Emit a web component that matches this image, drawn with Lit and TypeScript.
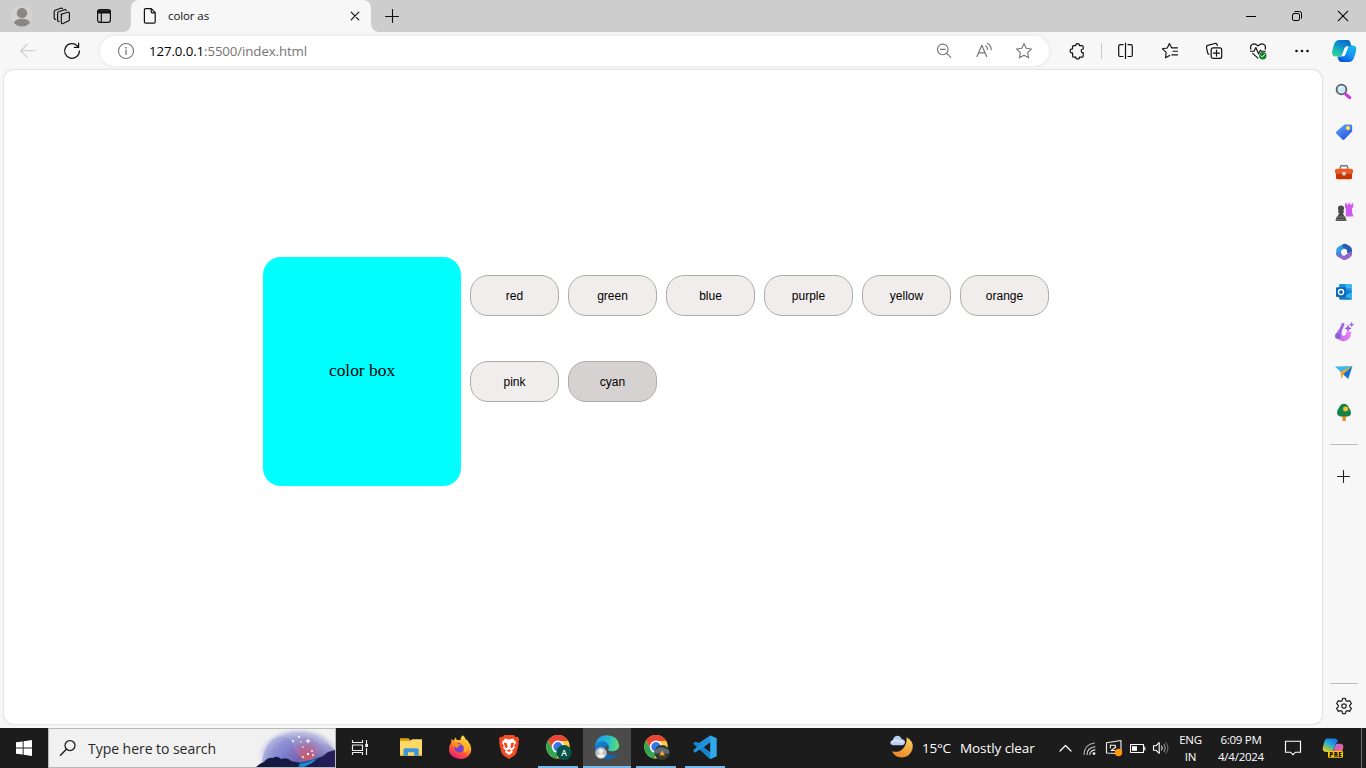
import { LitElement, html, css, svg } from "lit";
import { customElement, state } from "lit/decorators.js";

const icon = (w: number, h: number, body: unknown) => html`<svg
  width=${w} height=${h} viewBox="0 0 ${w} ${h}" fill="none" stroke-linecap="round" stroke-linejoin="round">${body}</svg>`;

const iconAvatar = icon(22, 22, svg`
  <defs><clipPath id="av"><circle cx="11" cy="11" r="10.6"/></clipPath></defs>
  <circle cx="11" cy="11" r="10.8" fill="#d5d1ce"/>
  <g clip-path="url(#av)"><circle cx="11" cy="8.2" r="5.1" fill="#8b8682"/><ellipse cx="11" cy="18" rx="8" ry="4.3" fill="#8b8682"/></g>`);
const iconWorkspaces = icon(18, 18, svg`<g stroke="#111" stroke-width="1.15">
  <path d="M8.3 7.3 15 5.2q1.7-.4 1.7 1.2v6.1q0 1-1 1.4l-5.4 2.6q-1.7.7-1.7-1V8.900q0-1.200 1-1.600" transform="translate(-.3 0)"/>
  <path d="M6 14.400q-1.400.3-1.400-1.100V6.400q0-1.200 1.100-1.600l5.900-2.100q1.200-.3 1.500.7"/>
  <path d="M2.700 12.400q-1.500.1-1.500-1.300V4.800q0-1.100 1-1.500L7.700 1.200q1.400-.4 1.800.5"/></g>`);
const iconVerticalTabs = icon(16, 16, svg`<g stroke="#111" stroke-width="1.2"><rect x="1.6" y="1.6" width="12.8" height="12.8" rx="2.3"/>
  <path d="M1.6 2.9h12.8v2H1.6z" fill="#111"/><path d="M5.3 5v9.2"/></g>`);
const iconFile = icon(16, 18, svg`<path d="M3.500 1.600h5.800l3.900 4v9.300q0 1.200-1.200 1.200H3.600q-1.200 0-1.200-1.200V2.800q0-1.200 1.100-1.200zM9.200 1.800v3q0 1 1 1h2.900" stroke="#111" stroke-width="1.2"/>`);
const iconClose = icon(10, 10, svg`<path d="M1.200 1.200l7.600 7.600M8.800 1.200L1.200 8.800" stroke="#111" stroke-width="1.2"/>`);
const iconPlus = icon(14, 14, svg`<path d="M7.500.5v13M.5 7.500h13" stroke="#111" stroke-width="1.1"/>`);
const iconAdd = icon(13, 13, svg`<path d="M6.500.5v12M.5 6.500h12" stroke="#222" stroke-width="1.1"/>`);
const iconMinimize = icon(12, 12, svg`<path d="M1.500 6.500h9" stroke="#000" stroke-width="1"/>`);
const iconRestore = icon(12, 12, svg`<g stroke="#000"><rect x="1.500" y="3.500" width="7" height="7" rx="1.400"/><path d="M3.900 1.500h4.700q1.900 0 1.900 1.900v4.700"/></g>`);
const iconWinClose = icon(12, 12, svg`<path d="M1.200 1.200l9.600 9.600M10.800 1.200L1.200 10.800" stroke="#000" stroke-width="1.05"/>`);

const iconBack = icon(18, 16, svg`<path d="M16.500 7.800H1.600M8.100 1.500 1.600 7.800l6.500 6.300" stroke="#cacaca" stroke-width="1.1"/>`);
const iconReload = icon(18, 18, svg`<path d="M16.400 9a7.400 7.400 0 1 1-2.300-5.400l1.400 1.500M15.600 1.200v4.200h-4.200" stroke="#111" stroke-width="1.25"/>`);
const iconInfo = icon(18, 18, svg`<circle cx="9" cy="9" r="7.500" stroke="#767676" stroke-width="1.1"/><path d="M9 8.100v4.500" stroke="#767676" stroke-width="1.3"/><circle cx="9" cy="5.700" r=".85" fill="#767676"/>`);
const iconZoomOut = icon(16, 16, svg`<g stroke="#767676" stroke-width="1.150"><circle cx="6.800" cy="6.400" r="5.300"/><path d="M4.400 6.400h4.800M10.700 10.300l4 4"/></g>`);
const iconReadAloud = icon(18, 18, svg`<g stroke="#767676" stroke-width="1.200"><path d="M2 14.500 6.800 3.200 11.600 14.500M3.600 10.900h6.400"/><path d="M10.800 3.900q1.800 1.200 1.700 3.500M12.700 1.400q3.500 2.200 3.500 6.300"/></g>`);
const starPath = "M9 1.500l2.200 4.800 5.200.7-3.800 3.600 1 5.200L9 13.200l-4.600 2.600 1-5.200L1.600 7l5.200-.7z";
const iconStar = icon(18, 18, svg`<path d=${starPath} stroke="#767676" stroke-width="1.1"/>`);
const iconPuzzle = icon(18, 18, svg`<path transform="translate(1 .2)" d="M4.800 3.400h2q-.3-1.900 1.800-2 2.100.1 1.800 2h2.500q1.300 0 1.300 1.300v2.100q-1.900-.2-2 1.800.1 2 2 1.800v3.300q0 1.300-1.300 1.300h-2.400q.2 1.700-1.900 1.700-2 0-1.800-1.700H4.900q-1.300 0-1.300-1.300v-3Q1.200 10.800 1.200 8.700 1.300 6.500 3.500 6.700V4.700Q3.500 3.400 4.800 3.400z" stroke="#111" stroke-width="1.2"/>`);
const iconSplit = icon(18, 18, svg`<path d="M6 2.700H3.300q-1.600 0-1.600 1.600v8.600q0 1.600 1.600 1.600H6M11 2.700h2.700q1.600 0 1.600 1.600v8.600q0 1.600-1.600 1.600H11M8.500 1.200v15.300" stroke="#111" stroke-width="1.2"/>`);
const iconFavorites = icon(18, 18, svg`<path d="M5.200 10.300 1.400 6.800l4.900-.8L8.400 1.600l2.200 4.200h5.900M12 9.200h4.500M10.800 12.800h5.700M5.200 10.300l-.7 5.400 4.200-2.300" stroke="#111" stroke-width="1.150"/>`);
const iconCollections = icon(18, 18, svg`<g stroke="#111" stroke-width="1.2"><rect x="6.200" y="5.900" width="10.500" height="10.500" rx="2"/><path d="M11.500 8.200v5.900M8.500 11.200h5.900M3.900 12.200Q2.900 12 2.600 10.900L1.500 5.500Q1.200 4 2.700 3.400L9.900 1.500q1.500-.3 2.100 1l.4 1"/></g>`);
const iconHeart = icon(19, 18, svg`<g stroke="#111" stroke-width="1.150"><path d="M1.800 7.200Q.8 4.100 3.100 2.400 5.800.9 9 3.900q3.200-3 5.900-1.500 2.400 1.700 1.300 4.800M1.500 9.200H5l1.800-3.600 2.700 6.200 1.900-3.600.9 1h3.900M3.700 11.400l5.200 4.700"/></g>
  <circle cx="13.800" cy="13.700" r="3.700" fill="#12832c"/><path d="M12.100 13.800l1.200 1.200 2.300-2.500" stroke="#fff" stroke-width="1"/>`);
const iconDots = icon(16, 4, svg`<g fill="#111"><circle cx="2.500" cy="2" r="1.300"/><circle cx="8" cy="2" r="1.300"/><circle cx="13.500" cy="2" r="1.300"/></g>`);
const iconCopilot = icon(26, 24, svg`<defs>
  <linearGradient id="ca" x1=".8" y1="0" x2=".2" y2="1"><stop stop-color="#0a66c8"/><stop offset=".45" stop-color="#0f95cf"/><stop offset=".7" stop-color="#1bb9b4"/><stop offset="1" stop-color="#39d48c"/></linearGradient>
  <linearGradient id="cb" x1=".8" y1="0" x2=".3" y2="1"><stop stop-color="#1fb6e4"/><stop offset=".5" stop-color="#149af5"/><stop offset="1" stop-color="#0853d8"/></linearGradient></defs>
  <path d="M17.500 6.500H22q3.400.3 3.300 3.500-.2 3.200-2 8-1.700 5-5.300 5h-8q-2-.3-2.700-2.500l-.9-3h3.200q1.800 0 2.600-2z" fill="url(#cb)"/>
  <path d="M8 1h9q1.600.2 2.200 2l1.300 4.200h-4.200q-1.900 0-2.600 1.900L11 15.700q-.7 1.800-2.400 1.800H4Q1 17 1 13.800q.3-3.300 2-8.300Q4.600 1 8 1z" fill="url(#ca)"/>
  <path d="M15.300 7.800h2.300l-.9 1.600-2.300 6.200q-.5 1.400-1.600 1.700h-2.400q.7-.5 1.100-1.600l2.300-6.400q.5-1.200 1.500-1.500z" fill="#fbfbfb"/>`);

const sideSearch = icon(18, 18, svg`<path d="M11 11.500l3.700 3.200" stroke="#d72be5" stroke-width="3"/><circle cx="6.500" cy="6.500" r="4.900" fill="#c9e9fb" stroke="#5d6064" stroke-width="1.800"/><path d="M4.200 5.900Q4.900 4.200 6.500 4" stroke="#fff"/>`);
const sideTag = icon(18, 18, svg`<defs><linearGradient id="tg" x1="0" y1="0" x2=".6" y2="1"><stop stop-color="#58a9fa"/><stop offset="1" stop-color="#2d57e5"/></linearGradient></defs>
  <path d="M9.500 1.500 15.600 1.400q1.600.1 1.600 1.700l-.1 5.500L9.400 16.500q-1 .9-2 0L1.500 10.800q-1-1.100 0-2.200z" fill="url(#tg)"/><circle cx="13" cy="5" r="2.200" fill="#f7cb4c"/><circle cx="13" cy="5" r=".9" fill="#fff3bc"/>`);
const sideTools = icon(20, 18, svg`<path d="M6.300 5.500V4Q6.300 2.800 7.500 2.800h5Q13.700 2.800 13.700 4v1.500" stroke="#777" stroke-width="1.400"/><path d="M3 5.800h14q2 0 2 2v2.500H1V7.800q0-2 2-2z" fill="#ef5a22"/><path d="M2 10.300h16v4.500q0 1.500-1.500 1.500h-13Q2 16.300 2 14.800z" fill="#c93405"/><rect x="8.200" y="8.700" width="3.600" height="3.800" rx=".9" fill="#cfd0d0"/>`);
const sideGames = icon(20, 20, svg`<path d="M11 1.300h1.900v1.500h1.400V1.300h2v1.500h1.400V1.300h1.500v4.500h-1.300l.5 6.200q1.200 1 .9 2.500h-7.500V6H11z" fill="#d259ee"/><g fill="#4b4b4b"><circle cx="7" cy="6.500" r="3.100"/><path d="M4 9.100h6v1.500H9q0 3 2.600 4.800l.9 3.500h-11l.9-3.500Q5 13.600 5 10.600H4z"/></g><path d="M3.200 15h7.600M2.200 17.800h9.600" stroke="#777"/>`);
const side365 = icon(18, 18, svg`<path d="M9.300.8 4.500 3Q1.300 4.600 1.200 8v3.500q.4 2.200 2.500 2.500l2.600-1.700V8l5.500-3.500z" fill="#31a1d8"/><path d="M7.700 1.300q2-1 4 0l3.300 1.900q2 1.300 2 3.900v5l-5-2.500V6.900L7.400 4.200z" fill="#2d5cb2"/><path d="M17 8.500v2.700q-.1 2-2 3.200l-3.500 2q-2 1-4 0l-3.600-2.200q-2.200-1.200-2.700-3.700 2.400 2.300 5 1.100L9 13l3-2.200z" fill="#9565c7"/><path d="M1.200 9.500q0 3.400 3 5 2.400-.6 2.400-3.200V9z" fill="#5d7bd8"/><path d="M9 5.800l2.900 1.600v3.200L9 12.200l-2.800-1.600V7.400z" fill="#f7f7f7"/>`);
const sideOutlook = icon(18, 18, svg`<path d="M5 1h10.500q1.200 0 1.200 1.200V9H4.100V2Q4.100 1 5 1z" fill="#1790df"/><path d="M10.600 1h4.900q1.200 0 1.200 1.200v3h-6z" fill="#35bdf3"/><path d="M4 9l13-1v7.700q0 1-1.200 1H5.500Q4 16.700 4 15z" fill="#1479ca"/><path d="M9 13.500 17 8.500V16z" fill="#2eb3ee"/><rect x="1" y="4.300" width="10" height="9.600" rx="1" fill="#0e68b7"/><circle cx="6" cy="9.100" r="2.600" stroke="#fff" stroke-width="1.300"/>`);
const sideBrush = icon(20, 20, svg`<defs><linearGradient id="br" x1="0" y1="1" x2="1" y2="0"><stop stop-color="#c566ec"/><stop offset="1" stop-color="#f788f2"/></linearGradient></defs><path d="M8.500 5.200Q1.500 8.500 2.300 13.600 4 19.400 9.800 19.200q7.300-.8 7.500-9.400l-5-.2q.2 3.700-2.500 4.100-2.600.1-1.900-3.100z" fill="url(#br)"/><path d="M9 2.300 4.500 12.500" stroke="#a06be2" stroke-width="3"/><circle cx="4" cy="14" r="3" fill="#8464da"/><path d="M14 3.200l1 2.200 2.200 1-2.200.9-1 2.200-.9-2.200-2.200-.9 2.200-1zM17.600 .7l.6 1.400 1.400.6-1.400.6-.6 1.400-.6-1.400-1.400-.6 1.400-.6z" fill="#a054e2" stroke="#a054e2" stroke-width=".5"/>`);
const sidePlane = icon(20, 18, svg`<path d="M1 3.500 18.500 3.100 8 10.200z" fill="#40b8ed"/><path d="M18.500 3.100 14.200 16 8 10.200z" fill="#1673d2"/><path d="M6.500 8.900 18.500 3.100 9.200 11.200 8 15.500q-.8-.2-1-1.400z" fill="#f2a527"/>`);
const sideTree = icon(18, 20, svg`<rect x="7.300" y="12.500" width="3.600" height="6.500" rx=".8" fill="#f08b22"/><path d="M9 1.700q3.400.1 4.600 3.500 2.700 3 2.400 6.100-.3 2.800-3.200 3.200H5q-2.800-.5-3-3.200Q1.800 8 4.300 5.200 5.500 1.800 9 1.700z" fill="#16824a"/><path d="M10.500 3.700l1.200 1.300 1.700.1v1.700l1.200 1-1.200 1.200v1.400h-1.700l-1.200 1-1.200-1H7.900V9L6.700 7.800l1.200-1V5.100h1.400z" transform="translate(2.600 1.200) scale(.75)" fill="#f5c532"/>`);
const iconGear = icon(18, 18, svg`<g stroke="#292929" stroke-width="1.250"><circle cx="9" cy="9" r="2.200"/><path d="M7.600 1.300h2.800l.5 2.300 1.500.8 2.200-.8 1.800 3L14.700 8.200v1.600l1.700 1.600-1.800 3-2.200-.8-1.500.8-.5 2.300H7.600l-.5-2.300-1.500-.8-2.200.8-1.800-3 1.700-1.600V8.200L1.600 6.600l1.800-3 2.200.8 1.500-.8z"/></g>`);

const iconWindows = icon(16, 16, svg`<path d="M0 2.300 6.700 1.400v6.200H0zM7.600 1.200 16 0v7.600H7.600zM0 8.400h6.700v6.200L0 13.700zM7.600 8.400H16V16l-8.400-1.200z" fill="#fff"/>`);
const iconFind = icon(18, 18, svg`<circle cx="11" cy="6.500" r="5" stroke="#1b1b1b" stroke-width="1.250"/><path d="M7.400 10.300 1.500 16.300" stroke="#1b1b1b" stroke-width="1.400"/>`);
const searchArt = html`<svg width="79" height="38" viewBox="0 0 79 38"><defs>
  <radialGradient id="sa1" cx=".5" cy=".5" r=".5"><stop stop-color="#8a7fc4"/><stop offset=".6" stop-color="#9a9dd3"/><stop offset=".8" stop-color="#b3b3dc" stop-opacity=".8"/><stop offset="1" stop-color="#e8e8f0" stop-opacity="0"/></radialGradient>
  <radialGradient id="sa4" cx=".5" cy=".5" r=".5"><stop stop-color="#cf5560"/><stop offset=".5" stop-color="#b9608d" stop-opacity=".7"/><stop offset="1" stop-color="#9a6bb0" stop-opacity="0"/></radialGradient>
  <linearGradient id="sa2" x1="0" y1="0" x2="1" y2="1"><stop stop-color="#a5abe0" stop-opacity=".1"/><stop offset=".5" stop-color="#7c7fd0" stop-opacity=".7"/><stop offset="1" stop-color="#6553a6"/></linearGradient>
  <linearGradient id="sa5" x1="0" y1="0" x2="0" y2="1"><stop stop-color="#9b9cd4" stop-opacity=".5"/><stop offset="1" stop-color="#5d4a94"/></linearGradient>
  <linearGradient id="sa3" x1="0" x2="1"><stop stop-color="#12183c"/><stop offset=".5" stop-color="#151c48"/><stop offset="1" stop-color="#261e5b"/></linearGradient></defs>
  <ellipse cx="43" cy="26" rx="42" ry="28" fill="url(#sa1)"/>
  <ellipse cx="51" cy="28" rx="20" ry="20" fill="url(#sa4)"/>
  <path d="M6 33Q9 12 22 8q9-2 13 5 5 12 12 18L20 38z" fill="url(#sa2)"/>
  <path d="M59 25q2-10 8-11 6 1 12 7v17H56z" fill="url(#sa5)"/>
  <path d="M32 38q-4-4 8-5 13-1 20-4 9-3 19-3v12z" fill="#1762a8"/><path d="M39 36q12-1 19-5l8-1-17 8z" fill="#268dd7"/>
  <path d="M0 38q4-4 8-5 4-5 9-4 4-3 8 1 7-2 10 2l9 2-2 4zM48 38l8-4 5-4 6-3 5-4 7-2v17z" fill="url(#sa3)"/>
  <g fill="#fff"><circle cx="37" cy="12" r="1"/><circle cx="43" cy="8" r="1.100"/><circle cx="45" cy="13" r=".8"/><path d="M52 9l.7 2.200 2.300.8-2.300.7L52 15l-.7-2.300L49 12l2.300-.8z"/><circle cx="47" cy="18" r=".8"/><circle cx="56" cy="22" r=".9"/><circle cx="52" cy="25" r="1.200"/><circle cx="57" cy="26" r=".9"/><circle cx="47" cy="28" r=".9"/></g></svg>`;
const iconTaskView = icon(18, 18, svg`<g stroke="#eee" stroke-width="1.150" stroke-linecap="butt"><path d="M1.500 1v2.500h10V1M1.500 16v-2.500h10V16"/><rect x="1.500" y="6" width="10" height="5.500"/><path d="M15.500 1v4M15.500 9v7"/></g><rect x="14.200" y="5" width="2.800" height="3" fill="#eee"/>`);
const iconExplorer = icon(24, 24, svg`<path d="M1 3.200h8.500l1.800 2H23v15.600H1z" fill="#dfa010"/><path d="M1 6h10.500l1.500-1.800h10v16.600H1z" fill="#ffd968"/><path d="M4.500 20.800v-6q0-1.500 1.500-1.500h12.200q1.500 0 1.500 1.500v6h-4.500v-3.500H9v3.500z" fill="#3997d9"/><path d="M1 19.800h3.500v1H1zM19.700 19.800H23v1h-3.300z" fill="#dca52c"/>`);
const iconFirefox = icon(24, 24, svg`<defs><linearGradient id="ff" x1=".8" y1="0" x2=".3" y2="1"><stop stop-color="#ffec45"/><stop offset=".4" stop-color="#ffab27"/><stop offset=".68" stop-color="#ff5832"/><stop offset="1" stop-color="#ea1684"/></linearGradient></defs>
  <path d="M14.700.2q2.100 1.400 3 4 1.600.4 2.200 1.900 5 6.100 2.600 11.800-3.100 6-10.300 6Q4.100 23.600 1.500 17.600-.1 12 3.300 7.500V3.700l2.100 2.100q1.700-1.700 1.600-3.500 1.500 1.400 1.900 2.700h3.500q.5-3.500 2.300-4.800z" fill="url(#ff)"/><path d="M6.500 9.500Q9 6.800 12 8.300l3.500 3.200q1.200 5.400-3.500 6-4.600 0-5.500-4z" fill="#7543d2"/><path d="M3.500 8.500q3-1.500 5.600-.3 1 .9 3.700.8-.2 1.400-2.200 2l-1.200 2q-4-1.300-5.900-4.500z" fill="#ff8d25"/><path d="M14 7.300q5.900 3.300 3.200 8.300" stroke="#ffb52b" stroke-width="2.500"/>`);
const iconBrave = icon(24, 24, svg`<path d="M7.200 0h9.600l1.700 2 2.300-.3 1.400 2.700-.8 2.200.4 2-2.200 8.900q-.5 2-2.500 3.300L12 24l-5.100-3.200q-2-1.300-2.500-3.300L2.200 8.600l.4-2-.8-2.200 1.400-2.700 2.300.3z" fill="#f34c24"/><path d="M12 4.500l3.900-.9 3.300 3.800-2 3 .7 2.300-2.800 2.700 1 1.700-4.100 3.100-4.100-3.100 1-1.700-2.800-2.700.7-2.300-2-3 3.300-3.800z" fill="#fff"/><path d="M6.800 7.400l3.100.8.8 3.800-1.500 1.600-1.700-2.600zM17.200 7.400l-3.100.8-.8 3.800 1.500 1.600 1.700-2.600zM9.600 15.600l2.400-1.100 2.400 1.100-2.400 1.500z" fill="#f34c24"/>`);
const chromeBody = svg`<circle cx="12" cy="12" r="11.800" fill="#ffce40"/><path d="M2 5.700A11.800 11.800 0 0 1 22.300 6.300H12L7.100 14.900z" fill="#e94435"/><path d="M1.900 5.900 7.100 14.900 12 17.700l-1.300 6A11.800 11.800 0 0 1 1.900 5.900z" fill="#31a753"/><circle cx="12" cy="12" r="6.200" fill="#fff"/><circle cx="12" cy="12" r="4.700" fill="#3976df"/>`;
const iconChromeA = icon(28, 26, svg`<g transform="translate(2 .8)">${chromeBody}<circle cx="18" cy="17.800" r="7.600" fill="#07534a"/><text x="18" y="21" text-anchor="middle" font-family="Open Sans, sans-serif" font-size="8.500" font-weight="600" fill="#fff">A</text></g>`);
const iconChromeB = icon(28, 26, svg`<g transform="translate(2 .8)">${chromeBody}<circle cx="18" cy="17.800" r="7.600" fill="#303731"/><path d="M10.800 15.600q5-6.500 14.200 0l.5 3H10.600z" fill="#5d6975"/><path d="M18.200 15.800l2.500 4.400h-5z" fill="#ffa527"/><path d="M15 21h6.500" stroke="#8d5a22"/></g>`);
const iconEdge = icon(28, 26, svg`<defs><linearGradient id="ea" x1="0" y1=".5" x2="1" y2=".6"><stop stop-color="#1d9be4"/><stop offset=".55" stop-color="#27bfcf"/><stop offset="1" stop-color="#62df65"/></linearGradient><linearGradient id="eb" x1="0" y1="0" x2="1" y2="1"><stop stop-color="#1685d5"/><stop offset="1" stop-color="#0a5aa8"/></linearGradient></defs>
  <g transform="translate(1 .3)"><path d="M1 12.500Q2 1 13 1q10.600.2 12.200 10-.3 5.700-6.800 5.900-4.300.1-4.500-1.700 1.700-1.400.7-3.700-1.200-2.800-5-3-5-.2-8.600 4z" fill="url(#ea)"/>
  <path d="M1 12.500q.9-5.300 7.700-5.500 5.200.5 6 4.500-3.700.2-4 3.800.3 5.700 6.700 6.200 3.300.1 6-1.900.7-.2.5.5Q20 24.700 13 25 1.500 24.400 1 12.500z" fill="url(#eb)"/>
  <path d="M9.600 13.500q-1.600 6.500 3.200 9.900 6.200.6 11-3.500-2.700 1.700-6.400 1.600-6.600-.6-6.700-6.200 0-1.600 1-2.800-1.300.2-2.100 1z" fill="#1467b4"/>
  <circle cx="7" cy="18.700" r="5.700" fill="#c1c1c1"/><circle cx="7" cy="17" r="2.200" fill="#f1f1f1"/><path d="M3.200 21.700q1.300-2.300 3.800-2.300t3.800 2.300q-1.700 1.900-3.800 1.900t-3.800-1.900z" fill="#f1f1f1"/></g>`);
const iconCode = icon(26, 26, svg`<path d="M18.200 1.500 24.500 4.300v17.900L18.200 25 13 20.200 2.700 9.200l1-1.500L7 9z" fill="#2695dc"/><path d="M2.700 8 1 9.700l16.500 14.800 1.500-4.500L5.500 8.500z" fill="#1683cc"/><path d="M18.200 1.500 1 16.500l2 2.200L19.500 7z" fill="#2292da"/><path d="M18.200 1.500 24.500 4.300v17.900L18.200 25z" fill="#30a9ee"/><path d="M18.200 8.200v10L11.700 13.200z" fill="#1d1d1d"/>`);

const iconMoon = icon(26, 26, svg`<defs><linearGradient id="mn" x1=".7" y1="0" x2=".3" y2="1"><stop stop-color="#f7ce5c"/><stop offset="1" stop-color="#ee8523"/></linearGradient></defs><path d="M17.500 2.300q7.500 3.700 6.100 11.200-2.300 8.600-10.500 9Q6.100 22.700 3 16.300q6.900 1.900 11.100-2.800 4.400-4.900 3.400-11.200z" fill="url(#mn)"/><path d="M4.500 10.300Q1.500 10.100 1.300 7.700 1.400 5.500 4 5 4.600 1.400 8.300.8q3.500.1 4.300 3.300 3.400.6 3.400 3.200-.2 2.900-3.200 3z" fill="#b9cef4"/><path d="M3 7q3-3 6.500-.5 2.600-1 4.500 1" stroke="#dfeafa" stroke-width="1.500"/>`);
const iconChevron = icon(14, 10, svg`<path d="M1 8 6.500 2.500 12 8" stroke="#fff" stroke-width="1.250"/>`);
const iconWifi = icon(16, 16, svg`<g stroke="#ddd" stroke-width="1.150"><path d="M2 14.500Q2.300 4.300 12.500 3" opacity=".75"/><path d="M5 14.500q.3-6.700 7.900-7.700M7.800 14.500q.3-3.900 5.100-4.600"/></g><circle cx="12" cy="13.600" r="1.400" fill="#eee"/>`);
const iconUpdate = icon(18, 18, svg`<path d="M1.500 3.800 16 1.500v13.200L1.500 14z" stroke="#eee" stroke-width="1.150"/><path d="M5.500 6.200h4.800v2M5.400 6v3M10.700 8.200 6.200 11.500h3.500" stroke="#eee" stroke-width="1.150"/><circle cx="13.500" cy="13.500" r="3.700" fill="#ff9800"/>`);
const iconBattery = icon(16, 12, svg`<path d="M.5 2.500h13v8h-13zM14.800 5v3" stroke="#fff" stroke-width="1.100"/><path d="M2 4.200h5v4.600H2z" fill="#fff"/>`);
const iconVolume = icon(18, 16, svg`<path d="M1.500 5.700h2.700l3-3v10.600l-3-3H1.500z" stroke="#fff" stroke-width="1.100"/><path d="M9.700 6q1.300 2 0 4" stroke="#fff"/><path d="M11.900 4.200q2.800 3.800 0 7.600" stroke="#aaa"/><path d="M14 2.700q4.200 5.300 0 10.600" stroke="#777"/>`);
const iconNotify = icon(18, 18, svg`<path d="M1.500 2.200h15v11h-5L9 15.700l-2.500-2.500h-5z" stroke="#fff" stroke-width="1.150" stroke-linejoin="miter"/>`);
const iconCopilotPre = icon(24, 24, svg`<defs><linearGradient id="pa" x1=".8" y1="0" x2=".2" y2="1"><stop stop-color="#1a6ddd"/><stop offset=".4" stop-color="#1ba6e8"/><stop offset=".7" stop-color="#77bf6f"/><stop offset="1" stop-color="#f1cf27"/></linearGradient><linearGradient id="pb" x1="0" y1="0" x2="1" y2="1"><stop stop-color="#a57bf1"/><stop offset=".5" stop-color="#df5caf"/><stop offset="1" stop-color="#f79762"/></linearGradient></defs><path d="M6 2.500h8q2.200.1 3 3.300l-2 1.200-3.500 9H5q-3.800-.4-3.300-3.700L3.300 5.700Q4 2.900 6 2.500z" fill="url(#pa)"/><path d="M15 7.800h5q2.600.5 2.300 3.300L20.500 18H11z" fill="url(#pb)"/><rect x="7" y="15" width="15" height="6.700" rx="1" fill="#fdc800"/><text x="14.500" y="20.700" text-anchor="middle" font-family="Open Sans, sans-serif" font-size="6.200" font-weight="800" fill="#111" textLength="12.500">PRE</text>`);

@customElement("color-picker")
class ColorPicker extends LitElement {
  @state() private color = "cyan";
  private colors = ["red", "green", "blue", "purple", "yellow", "orange", "pink", "cyan"];
  static styles = css`
    :host { display: flex; gap: 9px; padding: 187px 0 0 259px; }
    .box { width: 198px; height: 229px; border-radius: 18px; display: flex; align-items: center; justify-content: center;
      font: 17.4px "Liberation Serif", serif; color: #000; padding-bottom: 3px; box-sizing: border-box; }
    .grid { display: grid; grid-template-columns: repeat(6, 89px); grid-auto-rows: 41px; gap: 45px 9px; padding-top: 18px; }
    button { margin: 0; padding: 0; border: 1px solid #adabab; border-radius: 18px; background: #f0edec;
      font: 12px "Liberation Sans", Arial, sans-serif; color: #000; }
    button.active { background: #d6d2d1; }
  `;
  render() {
    return html`<div class="box" style="background:${this.color}">color box</div>
      <div class="grid">${this.colors.map((c) => html`<button
        class=${c === this.color ? "active" : ""} @click=${() => (this.color = c)}>${c}</button>`)}</div>`;
  }
}

@customElement("app-root")
class AppRoot extends LitElement {
  static styles = css`
    :host { display: flex; flex-direction: column; width: 1366px; height: 768px; overflow: hidden; background: #f7f7f7;
      font-family: "Open Sans", "Noto Sans", sans-serif; color: #111; }
    svg { display: block; flex: none; }
    .cell { display: flex; align-items: center; justify-content: center; flex: none; height: 100%; }
    .grow { flex: 1; }
    .w24 { width: 24px; } .w22 { width: 22px; } .w36 { width: 36px; } .w38 { width: 38px; } .w40 { width: 40px; }
    .w42 { width: 42px; } .w44 { width: 44px; } .w46 { width: 46px; } .w48 { width: 48px; }

    .titlebar { height: 32px; flex: none; display: flex; background: #cdcdcd; }
    .underlead { background: #f7f7f7; }
    .lead { display: flex; width: 131px; height: 32px; background: #cdcdcd; border-radius: 0 0 8px 0; }
    .tabwrap { display: flex; background: linear-gradient(#cdcdcd 50%, #f7f7f7 50%); }
    .tab { width: 240px; box-sizing: border-box; height: 32px; display: flex; align-items: center; background: #f7f7f7; border-radius: 8px 8px 0 0; padding-left: 11px; }
    .tabtitle { font-size: 11.5px; margin-left: 10px; flex: 1; letter-spacing: -0.1px; padding-bottom: 2px; }
    .tabclose { margin-right: 11px; }
    .under { flex: 1; display: flex; background: linear-gradient(#cdcdcd 50%, #f7f7f7 50%); }
    .trail { flex: 1; display: flex; background: #cdcdcd; border-radius: 0 0 0 8px; }

    .toolbar { height: 38px; flex: none; display: flex; padding-left: 6px; }
    .pill { width: 949px; height: 30px; margin: 4px 6px 0; border-radius: 15px; background: #fff; box-shadow: 0 0 4px rgba(0,0,0,.09);
      display: flex; align-items: center; padding: 0 5px 0 3px; box-sizing: border-box; }
    .url { flex: 1; font-size: 13.3px; letter-spacing: -0.12px; color: #747474; }
    .url b { font-weight: 400; color: #000; }
    .divider { width: 5px; display: flex; align-items: center; justify-content: center; }
    .divider i { width: 1px; height: 16px; background: #c8c8c8; }

    .main { flex: 1; display: flex; min-height: 0; padding-left: 4px; }
    .page { width: 1318px; height: 654px; background: #fff; border-radius: 9px; box-shadow: 0 0 2px rgba(0,0,0,.28); }
    .side { width: 44px; display: flex; flex-direction: column; align-items: center; padding-top: 2px; box-sizing: border-box; }
    .side .item { height: 40px; width: 44px; display: flex; align-items: center; justify-content: center; flex: none; }
    .rule { width: 28px; height: 1px; background: #bababa; flex: none; }
    .rule.top { margin-top: 12px; }
    .add { margin-top: 25px; padding-right: 1px; }
    .gear { margin: 13px 0 13px; }

    .taskbar { height: 40px; flex: none; display: flex; background: #1c1c1c; color: #fff; }
    .search { width: 288px; box-sizing: border-box; border: 1px solid #b9b9b9; background: #f1f1f1; display: flex; align-items: center; padding-left: 10px; overflow: hidden; }
    .search .label { flex: 1; margin-left: 11px; color: #292929; font-size: 14px; letter-spacing: -0.04px; white-space: nowrap; }
    .apps { display: flex; gap: 1px; padding-left: 3px; }
    .app { width: 48px; height: 40px; display: flex; flex-direction: column; align-items: center; }
    .app .pic { flex: 1; display: flex; align-items: center; }
    .app .bar { height: 2px; width: 40px; }
    .app.open .bar { background: #76b9ed; }
    .app.current { background: #4b4b4b; }
    .app.current .bar { width: 48px; }
    .weather { display: flex; align-items: center; font-size: 13.5px; white-space: nowrap; }
    .temp { margin-left: 7px; width: 38px; letter-spacing: -0.2px; }
    .sky { width: 94px; letter-spacing: -0.08px; }
    .stack { display: flex; flex-direction: column; justify-content: center; text-align: center; font-size: 11.5px; line-height: 17px; letter-spacing: -0.25px; height: 100%; white-space: nowrap; box-sizing: border-box; padding-bottom: 1px; }
    .lang { width: 38px; padding-right: 1px; }
    .clock { width: 62px; }
    .desk { width: 1px; height: 40px; background: #6d6d6d; margin: 0 4px 0 9px; }
  `;
  render() {
    const cell = (w: string, i: unknown) => html`<div class="cell ${w}">${i}</div>`;
    const app = (i: unknown, cls = "") => html`<div class="app ${cls}"><div class="pic">${i}</div><div class="bar"></div></div>`;
    return html`
      <div class="titlebar">
        <div class="underlead"><div class="lead">${cell("w44", iconAvatar)}${cell("w36", iconWorkspaces)}${cell("w48", iconVerticalTabs)}</div></div>
        <div class="tabwrap"><div class="tab">${iconFile}<span class="tabtitle">color as</span><span class="tabclose">${iconClose}</span></div></div>
        <div class="under"><div class="trail">${cell("w42", iconPlus)}<div class="grow"></div>
          ${cell("w46", iconMinimize)}${cell("w46", iconRestore)}${cell("w46", iconWinClose)}</div></div>
      </div>
      <div class="toolbar">
        ${cell("w44", iconBack)}${cell("w44", iconReload)}
        <div class="pill">${cell("w46", iconInfo)}<span class="url"><b>127.0.0.1</b>:5500/index.html</span>
          ${cell("w40", iconZoomOut)}${cell("w40", iconReadAloud)}${cell("w40", iconStar)}</div>
        ${cell("w44", iconPuzzle)}<div class="divider"><i></i></div>
        ${cell("w44", iconSplit)}${cell("w44", iconFavorites)}${cell("w44", iconCollections)}${cell("w44", iconHeart)}${cell("w44", iconDots)}${cell("w40", iconCopilot)}
      </div>
      <div class="main">
        <div class="page"><color-picker></color-picker></div>
        <div class="side">
          ${[sideSearch, sideTag, sideTools, sideGames, side365, sideOutlook, sideBrush, sidePlane, sideTree].map((i) => html`<div class="item">${i}</div>`)}
          <div class="rule top"></div><div class="add">${iconAdd}</div>
          <div class="grow"></div><div class="rule"></div><div class="gear">${iconGear}</div>
        </div>
      </div>
      <div class="taskbar">
        ${cell("w48", iconWindows)}
        <div class="search">${iconFind}<span class="label">Type here to search</span>${searchArt}</div>
        ${cell("w48", iconTaskView)}
        <div class="apps">${app(iconExplorer)}${app(iconFirefox)}${app(iconBrave)}${app(iconChromeA, "open")}${app(iconEdge, "open current")}${app(iconChromeB, "open")}${app(iconCode, "open")}</div>
        <div class="grow"></div>
        <div class="weather">${iconMoon}<span class="temp">15°C</span><span class="sky">Mostly clear</span></div>
        ${cell("w24", iconChevron)}${cell("w24", iconWifi)}${cell("w24", iconUpdate)}${cell("w24", iconBattery)}${cell("w22", iconVolume)}
        <div class="stack lang"><span>ENG</span><span>IN</span></div>
        <div class="stack clock"><span>6:09 PM</span><span>4/4/2024</span></div>
        ${cell("w42", iconNotify)}${cell("w38", iconCopilotPre)}
        <div class="desk"></div>
      </div>`;
  }
}
